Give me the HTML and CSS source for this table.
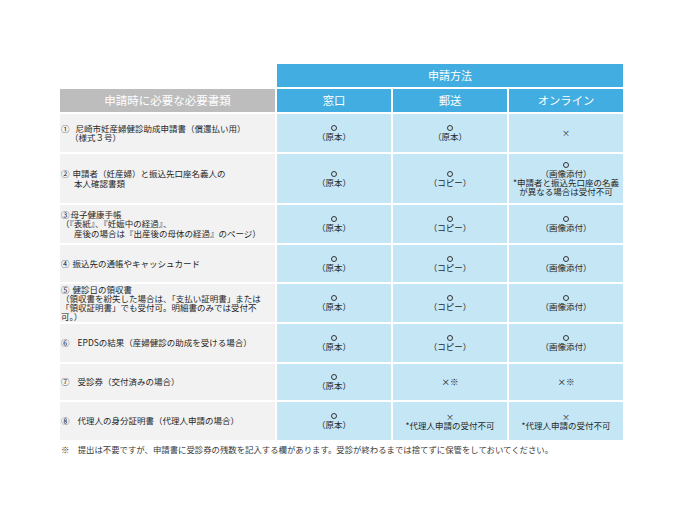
FILE: index.html
```html
<!DOCTYPE html>
<html lang="ja">
<head>
<meta charset="utf-8">
<link rel="stylesheet" href="styles.css">
</head>
<body>
<div class="page">
  <div class="grid">
    <div class="blank"></div>
    <div class="hd method">申請方法</div>

    <div class="hd gray">申請時に必要な必要書類</div>
    <div class="hd">窓口</div>
    <div class="hd">郵送</div>
    <div class="hd">オンライン</div>

    <div class="doc"><div><span class="num x">①</span>尼崎市妊産婦健診助成申請書（償還払い用）</div><div class="in9">（様式３号）</div></div>
    <div class="cell"><span class="o"></span><span>（原本）</span></div>
    <div class="cell"><span class="o"></span><span>（原本）</span></div>
    <div class="cell"><span class="x-mark">×</span></div>

    <div class="doc"><div><span class="num s">②</span>申請者（妊産婦）と振込先口座名義人の</div><div class="in13">本人確認書類</div></div>
    <div class="cell"><span class="o"></span><span>（原本）</span></div>
    <div class="cell"><span class="o"></span><span>（コピー）</span></div>
    <div class="cell"><span class="o"></span><span>（画像添付）</span><span>*申請者と振込先口座の名義</span><span>が異なる場合は受付不可</span></div>

    <div class="doc"><div><span class="num t">③</span>母子健康手帳</div><div>（『表紙』、『妊娠中の経過』、</div><div class="in13">産後の場合は『出産後の母体の経過』のページ）</div></div>
    <div class="cell"><span class="o"></span><span>（原本）</span></div>
    <div class="cell"><span class="o"></span><span>（コピー）</span></div>
    <div class="cell"><span class="o"></span><span>（画像添付）</span></div>

    <div class="doc"><div><span class="num s">④</span>振込先の通帳やキャッシュカード</div></div>
    <div class="cell"><span class="o"></span><span>（原本）</span></div>
    <div class="cell"><span class="o"></span><span>（コピー）</span></div>
    <div class="cell"><span class="o"></span><span>（画像添付）</span></div>

    <div class="doc"><div><span class="num s">⑤</span>健診日の領収書</div><div>（領収書を紛失した場合は、「支払い証明書」または</div><div>「領収証明書」でも受付可。明細書のみでは受付不</div><div>可。）</div></div>
    <div class="cell"><span class="o"></span><span>（原本）</span></div>
    <div class="cell"><span class="o"></span><span>（コピー）</span></div>
    <div class="cell"><span class="o"></span><span>（画像添付）</span></div>

    <div class="doc"><div><span class="num w">⑥</span>EPDSの結果（産婦健診の助成を受ける場合）</div></div>
    <div class="cell"><span class="o"></span><span>（原本）</span></div>
    <div class="cell"><span class="o"></span><span>（コピー）</span></div>
    <div class="cell"><span class="o"></span><span>（画像添付）</span></div>

    <div class="doc"><div><span class="num w">⑦</span>受診券（交付済みの場合）</div></div>
    <div class="cell"><span class="o"></span><span>（原本）</span></div>
    <div class="cell"><span>×※</span></div>
    <div class="cell"><span>×※</span></div>

    <div class="doc"><div><span class="num w">⑧</span>代理人の身分証明書（代理人申請の場合）</div></div>
    <div class="cell"><span class="o"></span><span>（原本）</span></div>
    <div class="cell"><span class="x-mark">×</span><span>*代理人申請の受付不可</span></div>
    <div class="cell"><span class="x-mark">×</span><span>*代理人申請の受付不可</span></div>
  </div>
  <p class="note">※　提出は不要ですが、申請書に受診券の残数を記入する欄があります。受診が終わるまでは捨てずに保管をしておいてください。</p>
</div>
</body>
</html>
```

FILE: styles.css
```css
html, body {
  margin: 0;
  padding: 0;
  background: #ffffff;
}

body {
  font-family: "Noto Sans CJK JP", "Noto Sans", sans-serif;
  color: #262626;
}

.page {
  padding: 64px 0 0 60px;
}

.grid {
  display: grid;
  grid-template-columns: 215px 114px 114px 114px;
  grid-template-rows: 23px 23px 38px 49px 38px 37px 38px 38px 36px 38px;
  gap: 2px;
  width: 563px;
}

.blank {
  background: #ffffff;
}

.hd {
  background: #42ade0;
  color: #ffffff;
  font-size: 11.3px;
  display: flex;
  align-items: center;
  justify-content: center;
  line-height: 1;
}

.hd.method {
  grid-column: 2 / 5;
  font-size: 11px;
}

.hd.gray {
  background: #bdbdbd;
  font-size: 11.5px;
}

.doc {
  background: #f2f2f2;
  font-size: 8.5px;
  line-height: 9.2px;
  display: flex;
  flex-direction: column;
  justify-content: center;
  padding-left: 1px;
  white-space: nowrap;
  overflow: hidden;
}

.num {
  display: inline-block;
}

.num.t {
  margin-right: 1px;
}

.num.s {
  margin-right: 3px;
}

.num.x {
  margin-right: 6px;
}

.num.w {
  margin-right: 8px;
}

.in9 {
  padding-left: 9px;
}

.in13 {
  padding-left: 13px;
}

.cell {
  background: #c5e7f5;
  font-size: 8.5px;
  line-height: 9.2px;
  display: flex;
  flex-direction: column;
  align-items: center;
  justify-content: center;
  white-space: nowrap;
  text-align: center;
}

.o {
  display: block;
  width: 4px;
  height: 4px;
  border: 1px solid #333333;
  border-radius: 50%;
  margin: 1px 0 1px;
}

.x-mark {
  font-size: 8px;
}

.note {
  margin: 4px 0 0 1px;
  font-size: 8.4px;
  line-height: 10px;
  color: #3a3a3a;
  white-space: nowrap;
}
```
